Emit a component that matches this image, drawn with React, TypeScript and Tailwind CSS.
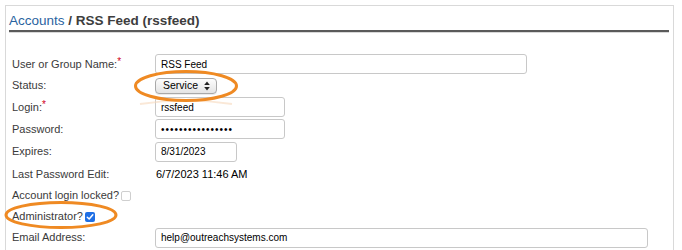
import React from "react";

const font = { fontFamily: '"Liberation Sans", Arial, Helvetica, sans-serif' };

function Row({ h, label, req, children }: { h: string; label?: React.ReactNode; req?: boolean; children?: React.ReactNode }) {
  return (
    <div className={`flex items-center ${h}`}>
      <div className="w-[143px] shrink-0 text-[11px] text-[#3a3a3a] flex items-center">
        {label}
        {req && <span className="text-[#d0021b] relative -top-[3px] text-[10px]">*</span>}
      </div>
      {children}
    </div>
  );
}

function TextInput({ w, value, cls }: { w: string; value: string; cls?: string }) {
  return (
    <div className={`${w} h-[20px] border border-[#c8c8c8] rounded-[3px] bg-white flex items-center pl-[5px] text-[10px] text-black ${cls ?? ""}`}>
      {value}
    </div>
  );
}

export default function App() {
  return (
    <div className="w-[682px] h-[250px] bg-white overflow-hidden relative" style={font}>
      <div className="absolute left-[5px] top-[5px] w-[669px] h-[260px] border-[1.5px] border-[#d9d9d9]" />
      <div className="relative pl-[9px] pr-[12px] pt-[13px]">
        <div className="text-[13.5px] leading-[15px] h-[17px]">
          <span className="text-[#2a63a0]">Accounts</span>
          <span className="text-[#3d3d3d] font-bold"> / RSS Feed (rssfeed)</span>
        </div>
        <div className="h-[2px] bg-[#5a5a5a] w-[660px]" />
        <div className="h-[1px] bg-[#d8d8d8] w-[660px]" />
      </div>
      <div className="relative pl-[12px] pt-[20px]">
        <Row h="h-[22px]" label="User or Group Name:" req>
          <TextInput w="w-[372px]" value="RSS Feed" />
        </Row>
        <Row h="h-[21px]" label="Status:">
          <div className="w-[62px] h-[16px] rounded-[4px] border border-[#a9a9a9] bg-gradient-to-b from-[#fdfdfd] to-[#e4e4e4] flex items-center justify-between pl-[7px] pr-[6px] text-[10.5px] text-black shadow-[0_1px_0_rgba(0,0,0,0.08)]">
            <span className="leading-none">Service</span>
            <svg width="6" height="10" viewBox="0 0 6 10">
              <path d="M3 0.5 L5.8 4 L0.2 4 Z" fill="#222" />
              <path d="M3 9.5 L5.8 6 L0.2 6 Z" fill="#222" />
            </svg>
          </div>
        </Row>
        <Row h="h-[22px]" label="Login:" req>
          <TextInput w="w-[130px]" value="rssfeed" />
        </Row>
        <Row h="h-[22px]" label="Password:">
          <TextInput w="w-[130px]" value="••••••••••••••••" cls="tracking-[1px]" />
        </Row>
        <Row h="h-[23px]" label="Expires:">
          <TextInput w="w-[82px]" value="8/31/2023" />
        </Row>
        <Row h="h-[22px]" label="Last Password Edit:">
          <span className="text-[11px] text-black pl-[1px]">6/7/2023 11:46 AM</span>
        </Row>
        <div className="flex items-center h-[21px] text-[11px] text-[#3a3a3a]">
          <span>Account login locked?</span>
          <span className="ml-[2px] w-[10px] h-[10px] rounded-[2px] border border-[#cfcfcf] bg-white" />
        </div>
        <div className="flex items-center h-[21px] text-[11px] text-[#3a3a3a]">
          <span>Administrator?</span>
          <span className="ml-[2px] w-[10px] h-[10px] rounded-[2px] bg-[#1f6fe5] flex items-center justify-center">
            <svg width="8" height="8" viewBox="0 0 8 8">
              <path d="M1.3 4.2 L3.2 6 L6.8 1.8" stroke="white" strokeWidth="1.5" fill="none" strokeLinecap="round" strokeLinejoin="round" />
            </svg>
          </span>
        </div>
        <Row h="h-[21px]" label="Email Address:">
          <TextInput w="w-[493px]" value="help@outreachsystems.com" />
        </Row>
      </div>
      <svg className="absolute left-0 top-0 pointer-events-none" width="682" height="250" viewBox="0 0 682 250">
        <path d="M140 104 Q186 97 232 104" stroke="#f6d9bd" strokeWidth="2" fill="none" opacity="0.6" />
        <ellipse cx="186" cy="86" rx="50.5" ry="14.5" fill="none" stroke="#ef8a23" strokeWidth="3" />
        <ellipse cx="61" cy="215" rx="55" ry="12.5" fill="none" stroke="#ef8a23" strokeWidth="3" />
      </svg>
    </div>
  );
}
